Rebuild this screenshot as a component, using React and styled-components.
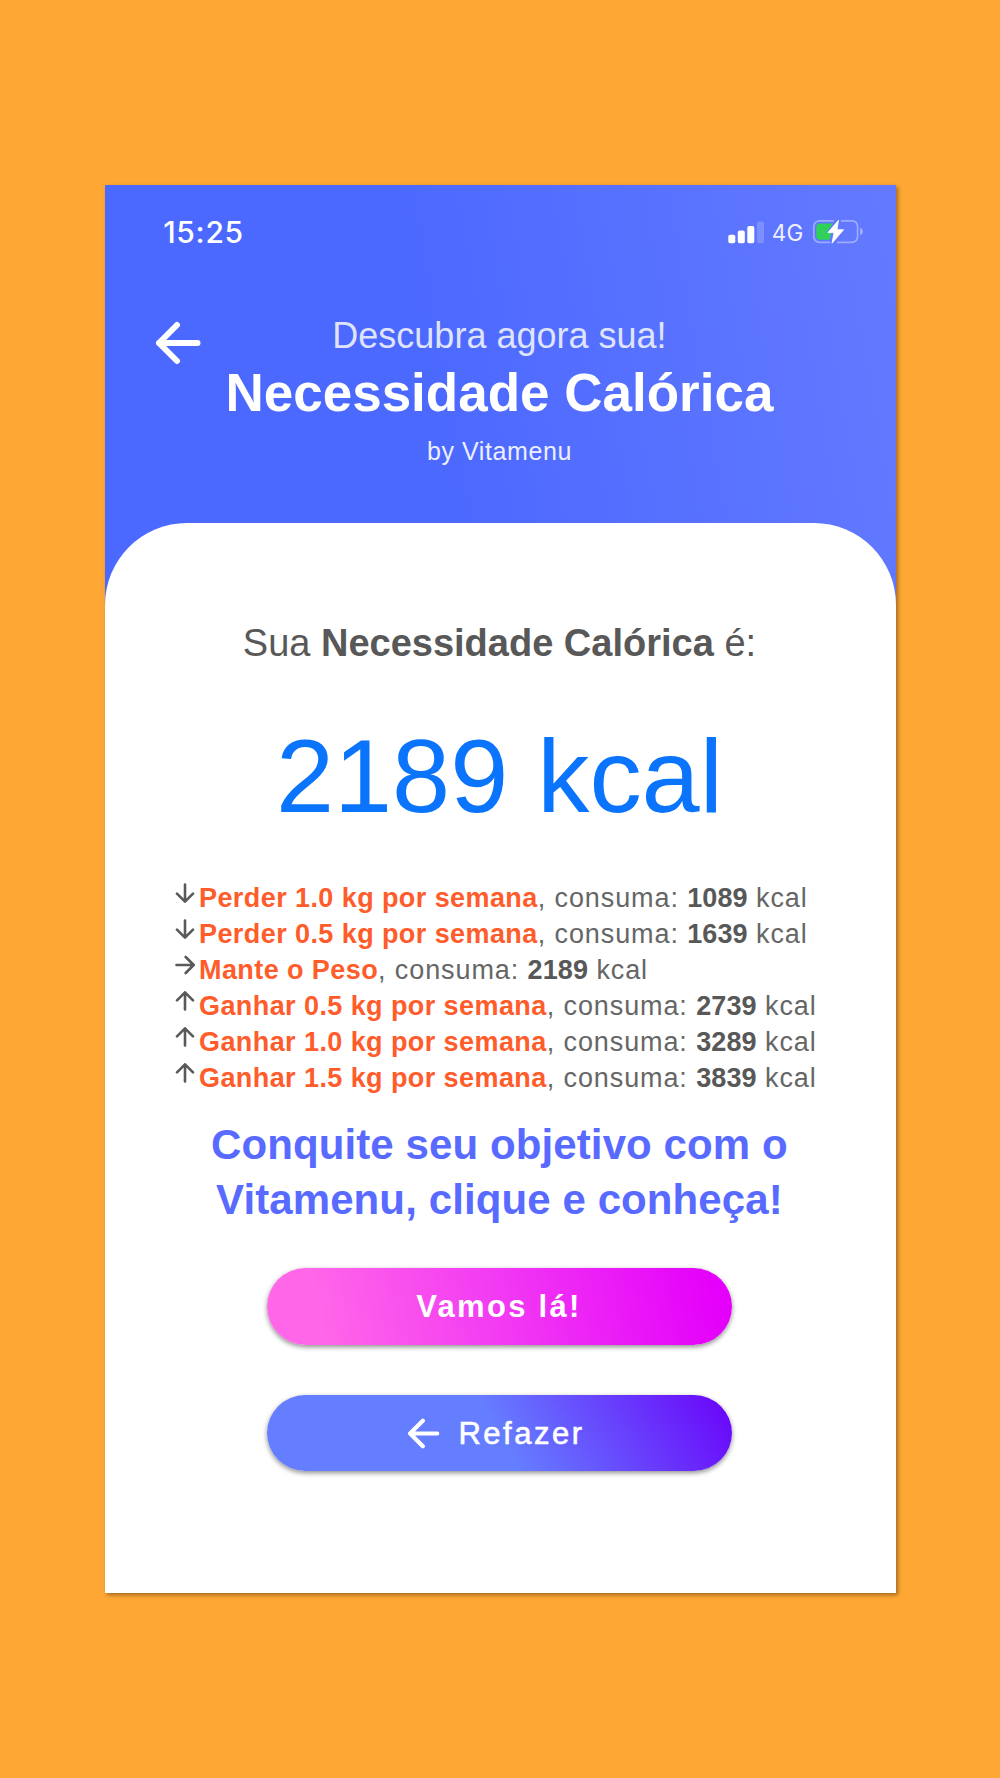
import React from "react";
import styled, { createGlobalStyle } from "styled-components";

const goals = [
  { dir: "down", label: "Perder 1.0 kg por semana", kcal: 1089 },
  { dir: "down", label: "Perder 0.5 kg por semana", kcal: 1639 },
  { dir: "right", label: "Mante o Peso", kcal: 2189 },
  { dir: "up", label: "Ganhar 0.5 kg por semana", kcal: 2739 },
  { dir: "up", label: "Ganhar 1.0 kg por semana", kcal: 3289 },
  { dir: "up", label: "Ganhar 1.5 kg por semana", kcal: 3839 },
];

const arrowPaths = {
  down: "M10 1.5V18.5M2 10.7L10 18.7L18 10.7",
  up: "M10 18.5V1.5M2 9.3L10 1.3L18 9.3",
  right: "M1.5 10H18.5M10.7 2L18.7 10L10.7 18",
};

function BackArrow({ width, height }) {
  return (
    <svg width={width} height={height} viewBox="0 0 46 44" fill="none">
      <path
        d="M22 4L4 22L22 40M4 22H42.5"
        stroke="#fff"
        strokeWidth="6"
        strokeLinecap="round"
        strokeLinejoin="round"
      />
    </svg>
  );
}

function Signal() {
  return (
    <svg width="37" height="24" viewBox="0 0 37 24" fill="#fff">
      <rect x="0.3" y="14.7" width="7" height="8.6" rx="1.8" />
      <rect x="9.8" y="10.6" width="7" height="12.7" rx="1.8" />
      <rect x="19.3" y="6" width="7" height="17.3" rx="1.8" />
      <rect x="29" y="1.4" width="7" height="21.9" rx="1.8" opacity="0.2" />
    </svg>
  );
}

function Battery() {
  return (
    <svg width="52" height="26" viewBox="0 0 52 26">
      <path
        d="M22 1.8H8C4.2 1.8 1.8 4.2 1.8 8V17C1.8 20.8 4.2 23.3 8 23.3H18M29 1.8H39.5C43.3 1.8 45.6 4.2 45.6 8V17C45.6 20.8 43.3 23.3 39.5 23.3H25"
        fill="none"
        stroke="#fff"
        strokeOpacity="0.38"
        strokeWidth="1.7"
      />
      <path d="M48.3 8.8C51.4 10.1 51.4 15 48.3 16.3Z" fill="#fff" fillOpacity="0.5" />
      <path d="M8 4.5H21L14.5 13.6H19.5L17.5 20.8H8C5.6 20.8 4.3 19.4 4.3 17V8.2C4.3 5.8 5.6 4.5 8 4.5Z" fill="#30d158" />
      <path
        d="M26.5 1.2L15.8 13.6H22L20 24.3L31.6 10.7H25Z"
        fill="#fff"
        stroke="#fff"
        strokeWidth="0.8"
        strokeLinejoin="round"
      />
    </svg>
  );
}

export default function App() {
  return (
    <Page>
      <GlobalStyle />
      <Phone>
        <StatusBar>
          <Time>15:25</Time>
          <StatusIcons>
            <Signal />
            <Network>4G</Network>
            <Battery />
          </StatusIcons>
        </StatusBar>
        <Header>
          <BackButton aria-label="Voltar">
            <BackArrow width={46} height={44} />
          </BackButton>
          <HeaderInfo>
            <Subtitle>Descubra agora sua!</Subtitle>
            <Title>Necessidade Calórica</Title>
            <Brand>by Vitamenu</Brand>
          </HeaderInfo>
        </Header>
        <Sheet>
          <Intro>
            Sua <b>Necessidade Calórica</b> é:
          </Intro>
          <Result>2189 kcal</Result>
          <GoalList>
            {goals.map((goal) => (
              <GoalRow key={goal.label}>
                <GoalArrow viewBox="0 0 20 20">
                  <path d={arrowPaths[goal.dir]} />
                </GoalArrow>
                <p>
                  <GoalName>{goal.label}</GoalName>, consuma: <Kcal>{goal.kcal}</Kcal> kcal
                </p>
              </GoalRow>
            ))}
          </GoalList>
          <CallText>
            Conquite seu objetivo com o
            <br />
            Vitamenu, clique e conheça!
          </CallText>
          <Buttons>
            <PillButton $variant="pink">Vamos lá!</PillButton>
            <PillButton $variant="blue">
              <BackArrow width={33} height={31} />
              Refazer
            </PillButton>
          </Buttons>
        </Sheet>
      </Phone>
    </Page>
  );
}

const GlobalStyle = createGlobalStyle`
  * {
    box-sizing: border-box;
  }
  body {
    margin: 0;
    background: #ffa735;
    font-family: "Liberation Sans", Arial, Helvetica, sans-serif;
  }
  h1, h2, p, ul {
    margin: 0;
    padding: 0;
  }
  svg {
    display: block;
    flex-shrink: 0;
  }
`;

const Page = styled.main`
  width: 1000px;
  height: 1778px;
  padding: 185.4px 0 0 104.7px;
  background: #ffa735;
`;
const Phone = styled.div`
  width: 791.5px;
  height: 1407.5px;
  display: flex;
  flex-direction: column;
  background: linear-gradient(80deg, #4c69ff 42%, #6379ff 98%) 0 0 / 100% 430px no-repeat #fff;
  box-shadow: 2px 2px 4px rgba(0, 0, 0, 0.38);
`;
const StatusBar = styled.div`
  height: 94px;
  padding: 0 32px 0 58.5px;
  display: flex;
  align-items: center;
  justify-content: space-between;
  color: #fff;
  font-family: Inter, sans-serif;
`;
const Time = styled.span`
  font-size: 30px;
  font-weight: 500;
  letter-spacing: 0.7px;
`;
const StatusIcons = styled.div`
  display: flex;
  align-items: center;
`;
const Network = styled.span`
  margin: 0 9px 0 7px;
  font-size: 22.5px;
  opacity: 0.9;
`;
const Header = styled.header`
  height: 243.5px;
  padding: 34.5px 50px 0;
  display: grid;
  grid-template-columns: 46px 1fr 46px;
`;
const BackButton = styled.button`
  width: 46px;
  height: 44px;
  margin-top: 7px;
  padding: 0;
  border: 0;
  background: none;
`;
const HeaderInfo = styled.div`
  padding-right: 2px;
  text-align: center;
  color: #fff;
`;
const Subtitle = styled.p`
  font-size: 36px;
  line-height: 44px;
  color: #dfe3fb;
`;
const Title = styled.h1`
  margin-top: 5px;
  font-size: 53px;
  line-height: 60px;
`;
const Brand = styled.p`
  margin-top: 13px;
  font-size: 25px;
  line-height: 30px;
  letter-spacing: 0.6px;
  color: #eceffe;
`;
const Sheet = styled.section`
  flex: 1;
  padding-top: 97px;
  border-radius: 82px 82px 0 0;
  background: #fff;
  color: #58595b;
`;
const Intro = styled.p`
  padding-right: 2px;
  font-size: 38px;
  line-height: 46px;
  text-align: center;
  color: #585858;
`;
const Result = styled.p`
  margin-top: 50px;
  padding-right: 2px;
  font-size: 104.4px;
  line-height: 120px;
  text-align: center;
  color: #0b74fc;
`;
const GoalList = styled.ul`
  margin-top: 44px;
  padding-left: 70.3px;
  list-style: none;
`;
const GoalRow = styled.li`
  height: 35.95px;
  display: flex;
  gap: 4px;
  font-size: 27px;
  line-height: 36px;
  letter-spacing: 0.9px;
  white-space: nowrap;
  color: #666;
`;
const GoalArrow = styled.svg`
  width: 20px;
  height: 20px;
  margin-top: 3.5px;
  fill: none;
  stroke: #58595b;
  stroke-width: 2.6;
  stroke-linecap: round;
  stroke-linejoin: round;
`;
const GoalName = styled.b`
  letter-spacing: 0.42px;
  color: #ff5c2b;
`;
const Kcal = styled.b`
  letter-spacing: 0.1px;
  color: #585858;
`;
const CallText = styled.h2`
  margin-top: 22.5px;
  padding-right: 2px;
  font-size: 42px;
  line-height: 54.5px;
  letter-spacing: 0.1px;
  text-align: center;
  color: #586aff;
`;
const Buttons = styled.div`
  margin-top: 41px;
  padding-right: 1px;
  display: flex;
  flex-direction: column;
  align-items: center;
  gap: 50px;
`;
const PillButton = styled.button`
  width: 465px;
  height: 76.5px;
  padding: ${(props) => (props.$variant === "pink" ? "2px 2px 0 0" : "2px 8px 0 0")};
  display: flex;
  align-items: center;
  justify-content: center;
  gap: 18px;
  border: 0;
  border-radius: 39px;
  box-shadow: 0 2px 5px rgba(0, 0, 0, 0.45);
  color: #fff;
  font-family: inherit;
  font-size: 31px;
  font-weight: ${(props) => (props.$variant === "pink" ? 700 : 400)};
  letter-spacing: ${(props) => (props.$variant === "pink" ? "2.3px" : "2.5px")};
  -webkit-text-stroke: ${(props) => (props.$variant === "pink" ? "0" : "0.6px #fff")};
  background: ${(props) =>
    props.$variant === "pink"
      ? "linear-gradient(80deg, #ff66e8 12%, #f23af3 50%, #e400fa 96%)"
      : "linear-gradient(60deg, #657dff 50%, #6a0cfa 96%)"};
`;
